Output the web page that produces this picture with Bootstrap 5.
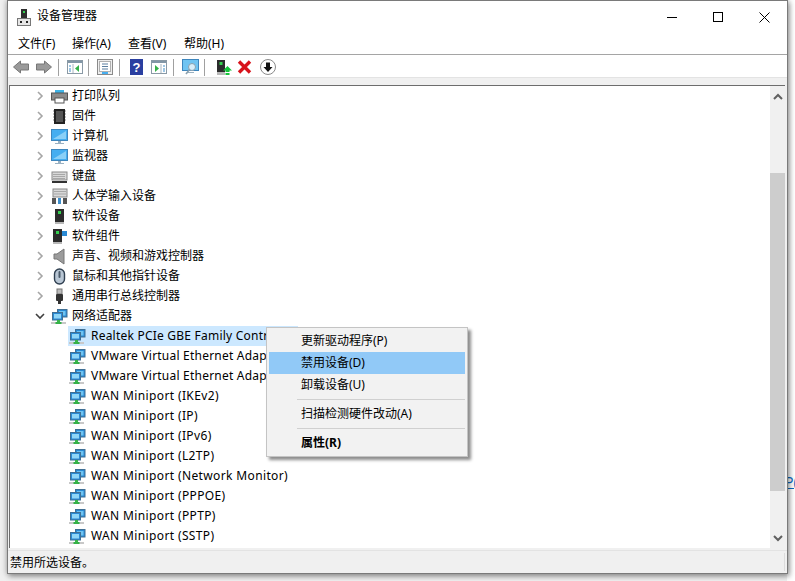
<!DOCTYPE html>
<html lang="zh-CN">
<head>
<meta charset="utf-8">
<title>设备管理器</title>
<link rel="stylesheet" href="https://cdn.jsdelivr.net/npm/bootstrap@5.3.0/dist/css/bootstrap.min.css">
<style>
html,body{height:100%;overflow:hidden}
body{background:#f0f0f0;font:12px/20px "Noto Sans","Noto Sans CJK SC",sans-serif;color:#000;position:relative}
.backstrip{position:absolute;left:787px;top:0;width:8px;height:581px;background:#fff}
.backlink{position:absolute;left:785px;top:472px;width:10px;overflow:hidden;color:#0a6cc4;text-decoration:underline;font-size:14px;white-space:nowrap}
.winframe{position:absolute;left:7px;top:0;width:781px;height:574px;background:#f0f0f0;border:1px solid #7a7a7a;box-shadow:0 0 6px rgba(0,0,0,.35),2px 3px 5px rgba(0,0,0,.25)}
.titlebar{height:32px;background:#fff;padding-left:9px}
.titlebar .wintitle{margin-left:6px;position:relative;top:-1px}
.winbtns{margin-left:auto}
.winbtn{width:46px;height:32px}
.menubar{height:22px;background:#fff;border-bottom:1px solid #a5a5a5;padding-left:10px}
.menubar span{width:56px;line-height:20px}
.menubar span:first-child{width:54px}
.toolbar{height:22px;background:#fff;padding-left:5px;padding-top:2px}
.tb-sep{width:1px;height:17px;background:#a0a0a0}
.toolbar svg{display:block}
.tg5{margin-left:5px}.tg6{margin-left:6px}.tg7{margin-left:7px}.tg8{margin-left:8px}.tg10{margin-left:10px}.tg11{margin-left:11px}
.band{height:8px;background:#f0f0f0;border-top:1px solid #e3e3e3}
.treewrap{height:463px;margin-left:1px;margin-right:2px;background:#fff;border-top:1px solid #6d6d6d;border-left:1px solid #6d6d6d}
.treelist{width:760px;overflow:hidden;margin:0;padding:0;list-style:none}
.treerow{height:20px;padding-left:25px;white-space:nowrap}
.treerow.childrow{padding-left:58px;letter-spacing:.37px}
.treerow.tightrow{letter-spacing:.22px}
.chev{width:10px;margin-right:6px;flex:none}
.ico{width:17px;height:17px;flex:none;margin-right:4px}
.hitem{display:flex;align-items:center;height:20px;padding-left:1px;padding-right:2px}
.hitem .ico{margin-right:5px}
.hitem.sel{background:#cce8ff;width:230px}
.scrolltrack{width:15px;background:#f0f0f0;flex:none}
.scrollhead{height:20px}
.scrollthumb{position:absolute;left:0;top:87px;width:15px;height:318px;background:#cdcdcd}
.statusbar{height:23px;margin-top:2px;border-top:1px solid #e3e3e3;padding-left:2px;line-height:23px;position:relative}
.grip{position:absolute;right:2px;top:2px;bottom:2px;width:1px;background:#dcdcdc}
.ctxmenu{position:absolute;left:266px;top:327px;width:202px;height:130px;padding:2px;margin:0;background:#f2f2f2;border:1px solid #c4c4c4;border-radius:0;box-shadow:3px 3px 3px rgba(0,0,0,.45);display:block;font-size:12px;min-width:0;z-index:5}
.ctxmenu .dropdown-item{height:22px;line-height:21px;padding:0 0 0 32px;color:#000;font-size:12px}
.ctxmenu .dropdown-item.active{background:#91c9f7;color:#000}
.ctxmenu .dropdown-divider{height:1px;margin:3px 0 3px 28px;padding:0;border-top:1px solid #d0d0d0;opacity:1}
</style>
</head>
<body>
<svg width="0" height="0" class="position-absolute">
<defs>
<symbol id="net" viewBox="0 0 17 17">
<rect x="6.5" y="1.5" width="9.5" height="7.5" fill="#2a8ad4" stroke="#3f6f94"/>
<rect x="8" y="3" width="6.5" height="4.5" fill="#6fc4f2"/>
<rect x="1.5" y="4.5" width="10" height="7.5" fill="#2a8ad4" stroke="#3f6f94"/>
<rect x="3" y="6" width="7" height="4.5" fill="#8fd6f8"/>
<rect x="6" y="12" width="3" height="2" fill="#3bb54a"/>
<rect x="0" y="14" width="15" height="2" fill="#c8c8c8"/>
<rect x="4.5" y="14" width="6" height="2" fill="#35b148"/>
</symbol>
<symbol id="tower" viewBox="0 0 17 17">
<rect x="4" y="1" width="9" height="13" fill="#2c2c2c"/>
<rect x="7" y="3" width="3" height="3" fill="#35d04f"/>
<rect x="4" y="14" width="9" height="2" fill="#b8b8b8"/>
</symbol>
<symbol id="mon" viewBox="0 0 17 17">
<rect x="0.5" y="1.5" width="16" height="11" fill="#45aef0" stroke="#3e86bd"/>
<path d="M2 11 L15 3 V11z" fill="#8ad0f7"/>
<rect x="7" y="13" width="3" height="2" fill="#9ab1c2"/>
<rect x="4" y="15" width="9" height="1" fill="#9ab1c2"/>
</symbol>
</defs>
</svg>

<div class="backstrip"></div>
<div class="backlink">P(</div>

<div class="winframe d-flex flex-column">
  <div class="titlebar d-flex align-items-center">
    <svg width="14" height="17" viewBox="0 0 14 17"><rect x="4" y="0" width="6" height="9" fill="#2f2f2f"/><rect x="6" y="2" width="2" height="2" fill="#35d04f"/><rect x="0.5" y="9.5" width="13" height="7" fill="#e6e6e6" stroke="#777"/><rect x="3" y="12" width="2" height="2" fill="#222"/><rect x="9" y="12" width="2" height="2" fill="#222"/></svg>
    <span class="wintitle">设备管理器</span>
    <div class="winbtns d-flex">
      <div class="winbtn d-flex align-items-center justify-content-center"><svg width="10" height="10"><path d="M0 5.5H10" stroke="#000"/></svg></div>
      <div class="winbtn d-flex align-items-center justify-content-center"><svg width="10" height="10"><rect x=".5" y=".5" width="9" height="9" fill="none" stroke="#000"/></svg></div>
      <div class="winbtn d-flex align-items-center justify-content-center"><svg width="11" height="11"><path d="M.5 .5L10.5 10.5M10.5 .5L.5 10.5" stroke="#000"/></svg></div>
    </div>
  </div>
  <div class="menubar d-flex align-items-center"><span>文件(F)</span><span>操作(A)</span><span>查看(V)</span><span>帮助(H)</span></div>
  <div class="toolbar d-flex align-items-center">
    <svg width="16" height="14"><path d="M.5 7L7.5 1V4H15.5V10H7.5V13Z" fill="#9a9a9a" stroke="#777"/></svg>
    <svg width="16" height="14" class="tg7"><path d="M15.5 7L8.5 1V4H.5V10H8.5V13Z" fill="#9a9a9a" stroke="#777"/></svg>
    <div class="tb-sep tg6"></div>
    <svg width="16" height="14" class="tg8"><rect x=".5" y=".5" width="15" height="13" fill="#fff" stroke="#8a9aa6"/><rect x="1" y="1" width="14" height="2" fill="#8296a6"/><path d="M6 4V13" stroke="#a8b6c0"/><path d="M2 6h2M2 9h2M2 11h2" stroke="#3d8ecb"/><path d="M12 5V12L8 8.5Z" fill="#35b148"/></svg>
    <div class="tb-sep tg5"></div>
    <svg width="16" height="16" class="tg8"><rect x=".5" y=".5" width="15" height="15" fill="#eee" stroke="#8a8a8a"/><rect x="2.5" y="2.5" width="11" height="10" fill="#fff" stroke="#b0b0b0"/><path d="M5 5h6M5 7.5h6M5 10h6" stroke="#5b7fa0"/><rect x="5" y="13" width="6" height="2" fill="#45aef0"/></svg>
    <div class="tb-sep tg6"></div>
    <svg width="13" height="16" class="tg10"><rect width="13" height="16" fill="#2a3fa0"/><text x="6.5" y="13" text-anchor="middle" font-size="13" font-weight="700" font-family="Liberation Sans,sans-serif" fill="#fff">?</text></svg>
    <svg width="16" height="14" class="tg8"><rect x=".5" y=".5" width="15" height="13" fill="#fff" stroke="#8a9aa6"/><rect x="1" y="1" width="14" height="2" fill="#8296a6"/><path d="M10 4V13" stroke="#a8b6c0"/><path d="M12 6h2M12 9h2M12 11h2" stroke="#3d8ecb"/><path d="M4 5V12L8 8.5Z" fill="#35b148"/></svg>
    <div class="tb-sep tg6"></div>
    <svg width="17" height="16" class="tg8"><rect x=".5" y=".5" width="16" height="11" fill="#6fc4f2" stroke="#3e86bd"/><rect x="5" y="13" width="7" height="1" fill="#9ab1c2"/><circle cx="10" cy="8" r="3.5" fill="#d8eefa" stroke="#8aa0ae"/><path d="M7.5 10.5L4 15" stroke="#8aa0ae" stroke-width="1.6"/></svg>
    <div class="tb-sep tg5"></div>
    <svg width="16" height="17" class="tg11"><rect x="1" y="1" width="8" height="12" fill="#2c2c2c"/><rect x="3.5" y="3" width="3" height="3" fill="#35d04f"/><rect x="1" y="13" width="8" height="3" fill="#b8b8b8"/><path d="M11.5 7L16 11.5H13.5V13H9.5V11.5H7Z" fill="#15c23a"/><rect x="9.5" y="14" width="4" height="2" fill="#15c23a"/></svg>
    <svg width="15" height="14" class="tg5"><path d="M2 1.5L13 12.5M13 1.5L2 12.5" stroke="#d8131b" stroke-width="3.4"/></svg>
    <svg width="16" height="16" class="tg8"><circle cx="8" cy="8" r="7.5" fill="#fff" stroke="#8a8a8a"/><path d="M6 3.5H10V8H12.5L8 13L3.5 8H6Z" fill="#111"/></svg>
  </div>
  <div class="band"></div>
  <div class="treewrap d-flex position-relative">
    <ul class="treelist flex-grow-1">
      <li class="treerow d-flex align-items-center"><svg class="chev" height="10" viewBox="0 0 10 10"><path d="M3 1L7 5L3 9" fill="none" stroke="#a6a6a6" stroke-width="1.6"/></svg><svg class="ico" viewBox="0 0 17 17"><rect x="4" y="2" width="9" height="3" fill="#3fb4e8"/><rect x="0.5" y="5" width="16" height="7" fill="#8b8b8b" stroke="#555"/><rect x="4" y="10" width="9" height="5" fill="#fff" stroke="#555"/></svg><span>打印队列</span></li>
      <li class="treerow d-flex align-items-center"><svg class="chev" height="10" viewBox="0 0 10 10"><path d="M3 1L7 5L3 9" fill="none" stroke="#a6a6a6" stroke-width="1.6"/></svg><svg class="ico" viewBox="0 0 17 17"><rect x="3" y="1" width="11" height="15" fill="#222"/><rect x="5" y="3" width="7" height="11" fill="#555"/><path d="M2 3h1M2 6h1M2 9h1M2 12h1M14 3h1M14 6h1M14 9h1M14 12h1" stroke="#888"/></svg><span>固件</span></li>
      <li class="treerow d-flex align-items-center"><svg class="chev" height="10" viewBox="0 0 10 10"><path d="M3 1L7 5L3 9" fill="none" stroke="#a6a6a6" stroke-width="1.6"/></svg><svg class="ico"><use href="#mon"/></svg><span>计算机</span></li>
      <li class="treerow d-flex align-items-center"><svg class="chev" height="10" viewBox="0 0 10 10"><path d="M3 1L7 5L3 9" fill="none" stroke="#a6a6a6" stroke-width="1.6"/></svg><svg class="ico"><use href="#mon"/></svg><span>监视器</span></li>
      <li class="treerow d-flex align-items-center"><svg class="chev" height="10" viewBox="0 0 10 10"><path d="M3 1L7 5L3 9" fill="none" stroke="#a6a6a6" stroke-width="1.6"/></svg><svg class="ico" viewBox="0 0 17 17"><rect x="1" y="4" width="15" height="8" fill="#d8d8d8" stroke="#8a8a8a"/><path d="M2.5 6.5h12M2.5 8.5h12M2.5 10.5h12" stroke="#777" stroke-dasharray="1 1"/><rect x="1" y="13" width="15" height="2" fill="#333"/></svg><span>键盘</span></li>
      <li class="treerow d-flex align-items-center"><svg class="chev" height="10" viewBox="0 0 10 10"><path d="M3 1L7 5L3 9" fill="none" stroke="#a6a6a6" stroke-width="1.6"/></svg><svg class="ico" viewBox="0 0 17 17"><rect x="2" y="1" width="14" height="8" fill="#d8d8d8" stroke="#8a8a8a"/><path d="M3.5 3.5h11M3.5 6h11" stroke="#777" stroke-dasharray="1 1"/><rect x="1" y="10" width="4" height="6" fill="#555"/><rect x="7" y="10" width="3" height="6" fill="#3d8ecb"/><rect x="12" y="10" width="4" height="6" fill="#555"/></svg><span>人体学输入设备</span></li>
      <li class="treerow d-flex align-items-center"><svg class="chev" height="10" viewBox="0 0 10 10"><path d="M3 1L7 5L3 9" fill="none" stroke="#a6a6a6" stroke-width="1.6"/></svg><svg class="ico"><use href="#tower"/></svg><span>软件设备</span></li>
      <li class="treerow d-flex align-items-center"><svg class="chev" height="10" viewBox="0 0 10 10"><path d="M3 1L7 5L3 9" fill="none" stroke="#a6a6a6" stroke-width="1.6"/></svg><svg class="ico" viewBox="0 0 17 17"><rect x="2" y="1" width="9" height="13" fill="#2c2c2c"/><rect x="5" y="3" width="3" height="3" fill="#35d04f"/><rect x="2" y="14" width="9" height="2" fill="#b8b8b8"/><rect x="11" y="3" width="5" height="5" fill="#2a8ad4"/></svg><span>软件组件</span></li>
      <li class="treerow d-flex align-items-center"><svg class="chev" height="10" viewBox="0 0 10 10"><path d="M3 1L7 5L3 9" fill="none" stroke="#a6a6a6" stroke-width="1.6"/></svg><svg class="ico" viewBox="0 0 17 17"><path d="M3 6H6L13 1V16L6 11H3Z" fill="#9c9c9c" stroke="#777"/></svg><span>声音、视频和游戏控制器</span></li>
      <li class="treerow d-flex align-items-center"><svg class="chev" height="10" viewBox="0 0 10 10"><path d="M3 1L7 5L3 9" fill="none" stroke="#a6a6a6" stroke-width="1.6"/></svg><svg class="ico" viewBox="0 0 17 17"><rect x="3.5" y="1" width="10" height="15" rx="5" fill="#b8c6d4" stroke="#2f3f50" stroke-width="1.4"/><rect x="7.5" y="3" width="2" height="7" rx="1" fill="#4a5a6a"/></svg><span>鼠标和其他指针设备</span></li>
      <li class="treerow d-flex align-items-center"><svg class="chev" height="10" viewBox="0 0 10 10"><path d="M3 1L7 5L3 9" fill="none" stroke="#a6a6a6" stroke-width="1.6"/></svg><svg class="ico" viewBox="0 0 17 17"><rect x="6" y="1" width="5" height="5" fill="#bbb" stroke="#777"/><rect x="5" y="6" width="7" height="7" rx="1" fill="#333"/><rect x="7" y="13" width="3" height="3" fill="#333"/></svg><span>通用串行总线控制器</span></li>
      <li class="treerow d-flex align-items-center"><svg class="chev" height="10" viewBox="0 0 10 10"><path d="M1 3L5 7L9 3" fill="none" stroke="#404040" stroke-width="1.6"/></svg><svg class="ico"><use href="#net"/></svg><span>网络适配器</span></li>
      <li class="treerow childrow tightrow d-flex align-items-center"><div class="hitem sel"><svg class="ico"><use href="#net"/></svg><span>Realtek PCIe GBE Family Contr</span></div></li>
      <li class="treerow childrow tightrow d-flex align-items-center"><div class="hitem"><svg class="ico"><use href="#net"/></svg><span>VMware Virtual Ethernet Adap</span></div></li>
      <li class="treerow childrow tightrow d-flex align-items-center"><div class="hitem"><svg class="ico"><use href="#net"/></svg><span>VMware Virtual Ethernet Adap</span></div></li>
      <li class="treerow childrow d-flex align-items-center"><div class="hitem"><svg class="ico"><use href="#net"/></svg><span>WAN Miniport (IKEv2)</span></div></li>
      <li class="treerow childrow d-flex align-items-center"><div class="hitem"><svg class="ico"><use href="#net"/></svg><span>WAN Miniport (IP)</span></div></li>
      <li class="treerow childrow d-flex align-items-center"><div class="hitem"><svg class="ico"><use href="#net"/></svg><span>WAN Miniport (IPv6)</span></div></li>
      <li class="treerow childrow d-flex align-items-center"><div class="hitem"><svg class="ico"><use href="#net"/></svg><span>WAN Miniport (L2TP)</span></div></li>
      <li class="treerow childrow d-flex align-items-center"><div class="hitem"><svg class="ico"><use href="#net"/></svg><span>WAN Miniport (Network Monitor)</span></div></li>
      <li class="treerow childrow d-flex align-items-center"><div class="hitem"><svg class="ico"><use href="#net"/></svg><span>WAN Miniport (PPPOE)</span></div></li>
      <li class="treerow childrow d-flex align-items-center"><div class="hitem"><svg class="ico"><use href="#net"/></svg><span>WAN Miniport (PPTP)</span></div></li>
      <li class="treerow childrow d-flex align-items-center"><div class="hitem"><svg class="ico"><use href="#net"/></svg><span>WAN Miniport (SSTP)</span></div></li>
    </ul>
    <div class="scrolltrack position-relative">
      <div class="scrollhead d-flex align-items-center justify-content-center"><svg width="10" height="7"><path d="M1 6L5 2L9 6" fill="none" stroke="#606060" stroke-width="2"/></svg></div>
      <div class="scrollthumb"></div>
      <div class="scrollhead position-absolute bottom-0 w-100 d-flex align-items-center justify-content-center"><svg width="10" height="7"><path d="M1 1L5 5L9 1" fill="none" stroke="#606060" stroke-width="2"/></svg></div>
    </div>
  </div>
  <div class="statusbar">禁用所选设备。<div class="grip"></div></div>
</div>

<ul class="dropdown-menu ctxmenu list-unstyled">
  <li><span class="dropdown-item">更新驱动程序(P)</span></li>
  <li><span class="dropdown-item active">禁用设备(D)</span></li>
  <li><span class="dropdown-item">卸载设备(U)</span></li>
  <li><hr class="dropdown-divider"></li>
  <li><span class="dropdown-item">扫描检测硬件改动(A)</span></li>
  <li><hr class="dropdown-divider"></li>
  <li><span class="dropdown-item fw-bold">属性(R)</span></li>
</ul>
</body>
</html>
